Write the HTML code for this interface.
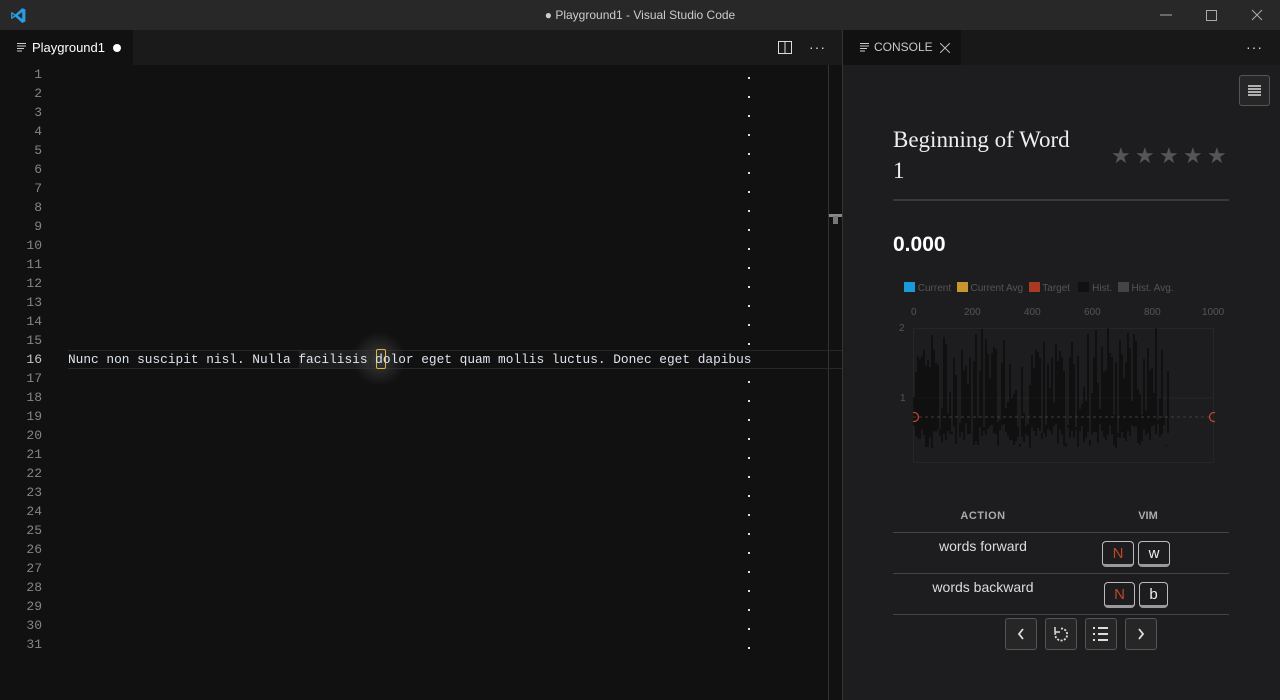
<!DOCTYPE html>
<html><head><meta charset="utf-8"><style>
*{margin:0;padding:0;box-sizing:border-box}
body{width:1280px;height:700px;overflow:hidden;background:#111;font-family:"Liberation Sans",sans-serif;position:relative}
.abs{position:absolute}
#title{left:0;top:0;width:1280px;height:30px;background:#282828;color:#ccc;font-size:12px;text-align:center;line-height:30px}
#tabs{left:0;top:30px;width:843px;height:35px;background:#1a1a1a}
#tab1{left:0;top:30px;width:133px;height:35px;background:#111;color:#fff;font-size:13px;line-height:35px;padding-left:32px}
.ln{position:absolute;left:0;width:42px;text-align:right;font-family:"Liberation Mono",monospace;font-size:13px;color:#858585;line-height:19px}
.dot{position:absolute;left:748px;width:2px;height:2px;background:#ddd}
#code{left:68px;top:350px;font-family:"Liberation Mono",monospace;font-size:12.8px;line-height:19px;color:#dde4ee;white-space:pre}
#rp{left:843px;top:65px;width:437px;height:635px;background:#1d1d1f}
#rtabs{left:843px;top:30px;width:437px;height:35px;background:#181818}
#rtab{left:843px;top:30px;width:118px;height:35px;background:#111;color:#c8c8c8;font-size:12px;line-height:35px;padding-left:31px}
.btn{position:absolute;border:1px solid #555;border-radius:3px;background:#262626}
.key{position:absolute;border:1px solid #bbb;border-bottom:3px solid #999;border-radius:4px;font-size:15px;text-align:center;line-height:24px;color:#eee}
.star{position:absolute;top:143px;color:#555;font-size:22px}
</style></head><body>
<div id="title" class="abs">● Playground1 - Visual Studio Code</div>
<svg class="abs" style="left:10px;top:7px" width="17" height="17" viewBox="0 0 16 16"><path d="M11.5 1L5 7 2 4.8 1 5.3v5.4l1 .5L5 9l6.5 6 3-1.4V2.4z M11.5 4.8v6.4L7.3 8z M2.3 6.3L4 8 2.3 9.7z" fill="#2b9ce0" fill-rule="evenodd"/></svg>
<svg class="abs" style="left:1160px;top:9px" width="110" height="12"><line x1="0" y1="6" x2="12" y2="6" stroke="#aaa"/><rect x="46.5" y="1.5" width="10" height="10" fill="none" stroke="#aaa"/><path d="M92 1l10 10M102 1L92 11" stroke="#aaa"/></svg>
<div id="tabs" class="abs"></div>
<div id="tab1" class="abs">Playground1</div>
<svg class="abs" style="left:17px;top:43px" width="10" height="9"><path d="M0 .5h9M0 3h9M0 5.5h7M0 8h5" stroke="#ccc"/></svg>
<div class="abs" style="left:113px;top:44px;width:8px;height:8px;border-radius:50%;background:#fff"></div>
<svg class="abs" style="left:778px;top:41px" width="14" height="13"><rect x=".5" y=".5" width="13" height="12" fill="none" stroke="#ddd"/><line x1="7" y1="0" x2="7" y2="13" stroke="#ddd"/></svg>
<div class="abs" style="left:809px;top:39px;color:#ddd;font-size:14px;letter-spacing:1px">···</div>
<div class="abs" style="left:828px;top:65px;width:1px;height:635px;background:#333"></div>
<div class="abs" style="left:842px;top:30px;width:1px;height:670px;background:#333"></div>
<div class="abs" style="left:829px;top:214px;width:13px;height:3px;background:#888"></div>
<div class="abs" style="left:833px;top:216px;width:5px;height:8px;background:#777"></div>
<div class="abs" style="left:68px;top:350px;width:774px;height:19px;border-top:1px solid #282828;border-bottom:1px solid #282828"></div>
<div class="abs" style="left:299px;top:351px;width:70px;height:17px;background:#1e1e1e"></div>
<div class="abs" style="left:352px;top:332px;width:54px;height:54px;border-radius:50%;background:radial-gradient(#3a3a3a,rgba(40,40,40,0) 70%)"></div>
<div class="abs" style="left:376px;top:349px;width:10px;height:20px;border:1px solid #e3b341;border-radius:2px"></div>
<div id="code" class="abs">Nunc non suscipit nisl. Nulla facilisis dolor eget quam mollis luctus. Donec eget dapibus</div>
<div id="lns"></div>
<div id="rtabs" class="abs"></div>
<div id="rtab" class="abs">CONSOLE</div>
<svg class="abs" style="left:860px;top:43px" width="10" height="9"><path d="M0 .5h9M0 3h9M0 5.5h7M0 8h5" stroke="#ccc"/></svg>
<svg class="abs" style="left:940px;top:43px" width="10" height="10"><path d="M0 0l10 10M10 0L0 10" stroke="#bbb"/></svg>
<div class="abs" style="left:1246px;top:39px;color:#ddd;font-size:14px;letter-spacing:1px">···</div>
<div id="rp" class="abs"></div>
<div class="btn" style="left:1239px;top:75px;width:31px;height:31px"></div>
<svg class="abs" style="left:1248px;top:85px" width="13" height="11"><path d="M0 1h13M0 4h13M0 7h13M0 10h13" stroke="#ddd" stroke-width="1.6"/></svg>
<div class="abs" style="left:893px;top:124px;font-family:'Liberation Serif',serif;font-size:23px;color:#eee;line-height:31px">Beginning of Word<br>1</div>
<div class="star" style="left:1111px">★</div><div class="star" style="left:1135px">★</div><div class="star" style="left:1159px">★</div><div class="star" style="left:1183px">★</div><div class="star" style="left:1207px">★</div>
<div class="abs" style="left:893px;top:199px;width:336px;height:2px;background:#3a3a3a"></div>
<div class="abs" style="left:893px;top:233px;font-size:21px;font-weight:bold;color:#fff">0.000</div>
<div class="abs" style="left:904px;top:282px;font-size:10px;color:#555;white-space:nowrap;line-height:12px">
<span style="display:inline-block;width:11px;height:10px;background:#1a9ad6;vertical-align:-1px"></span> Current &nbsp;<span style="display:inline-block;width:11px;height:10px;background:#c8962e;vertical-align:-1px"></span> Current Avg &nbsp;<span style="display:inline-block;width:11px;height:10px;background:#a83a22;vertical-align:-1px"></span> Target &nbsp; <span style="display:inline-block;width:11px;height:10px;background:#111;vertical-align:-1px"></span> Hist. &nbsp;<span style="display:inline-block;width:11px;height:10px;background:#444;vertical-align:-1px"></span> Hist. Avg.</div>
<div class="abs" style="left:904px;top:307px;width:330px;font-size:10px;color:#555">
<span class="abs" style="left:7px">0</span><span class="abs" style="left:60px">200</span><span class="abs" style="left:120px">400</span><span class="abs" style="left:180px">600</span><span class="abs" style="left:240px">800</span><span class="abs" style="left:298px">1000</span></div>
<div class="abs" style="left:899px;top:323px;font-size:10px;color:#555">2</div>
<div class="abs" style="left:900px;top:393px;font-size:10px;color:#555">1</div>
<svg class="abs" style="left:913px;top:328px" width="302" height="135" id="ch">
<rect x=".5" y=".5" width="300" height="134" fill="none" stroke="#262628"/>
<line x1="0" y1="70" x2="300" y2="70" stroke="#262628"/>
<g id="bars" stroke="#0d0d0d" stroke-width="1.5"></g>
<line x1="0" y1="89" x2="300" y2="89" stroke="#4a3a36" stroke-dasharray="3 3"/>
<circle cx="1" cy="89" r="4.5" fill="none" stroke="#c0452a" stroke-width="1.3"/>
<circle cx="301" cy="89" r="4.5" fill="none" stroke="#c0452a" stroke-width="1.3"/>
</svg>
<div class="abs" style="left:893px;top:510px;width:180px;text-align:center;font-size:11px;font-weight:bold;color:#aaa;letter-spacing:.5px">ACTION</div>
<div class="abs" style="left:1073px;top:510px;width:150px;text-align:center;font-size:11px;font-weight:bold;color:#aaa">VIM</div>
<div class="abs" style="left:893px;top:532px;width:336px;height:1px;background:#444"></div>
<div class="abs" style="left:893px;top:573px;width:336px;height:1px;background:#444"></div>
<div class="abs" style="left:893px;top:614px;width:336px;height:1px;background:#444"></div>
<div class="abs" style="left:893px;top:538px;width:180px;text-align:center;font-size:14px;color:#ddd">words forward</div>
<div class="abs" style="left:893px;top:579px;width:180px;text-align:center;font-size:14px;color:#ddd">words backward</div>
<div class="key" style="left:1102px;top:541px;width:32px;height:26px;color:#c0452a">N</div>
<div class="key" style="left:1138px;top:541px;width:32px;height:26px">w</div>
<div class="key" style="left:1104px;top:582px;width:31px;height:26px;color:#c0452a">N</div>
<div class="key" style="left:1139px;top:582px;width:29px;height:26px">b</div>
<div class="btn" style="left:1005px;top:618px;width:32px;height:32px"></div>
<div class="btn" style="left:1045px;top:618px;width:32px;height:32px"></div>
<div class="btn" style="left:1085px;top:618px;width:32px;height:32px"></div>
<div class="btn" style="left:1125px;top:618px;width:32px;height:32px"></div>
<svg class="abs" style="left:1005px;top:618px" width="160" height="32" fill="none" stroke="#ddd" stroke-width="1.8">
<path d="M18 11l-4 5 4 5"/><path d="M134 11l4 5-4 5"/>
<path d="M56 10.5a6 6 0 1 1-5.5 4" stroke-dasharray="2 1.5"/><path d="M50 9v5h5" stroke-width="1.5"/>
<path d="M88 10h2M88 16h2M88 22h2M93 10h10M93 16h10M93 22h10" stroke-width="2"/>
</svg>
<script>
(function(){
var h='';for(var i=1;i<=31;i++){var t=65+(i-1)*19;h+='<div class="ln" style="top:'+t+'px;'+(i==16?'color:#c6c6c6':'')+'">'+i+'</div>';if(i!=16)h+='<div class="dot" style="top:'+(t+12)+'px"></div>';}
document.getElementById('lns').innerHTML=h;
var g=document.getElementById('bars');var s=7;
function r(){s=(s*9301+49297)%233280;return s/233280;}
for(var x=1;x<256;x+=2){var top=20+r()*100;if(r()<.3)top=r()*40;var bot=95+r()*25;
var l=document.createElementNS('http://www.w3.org/2000/svg','line');
l.setAttribute('x1',x);l.setAttribute('x2',x);l.setAttribute('y1',Math.round(top));l.setAttribute('y2',Math.round(bot));g.appendChild(l);}
})();
</script>
</body></html>
